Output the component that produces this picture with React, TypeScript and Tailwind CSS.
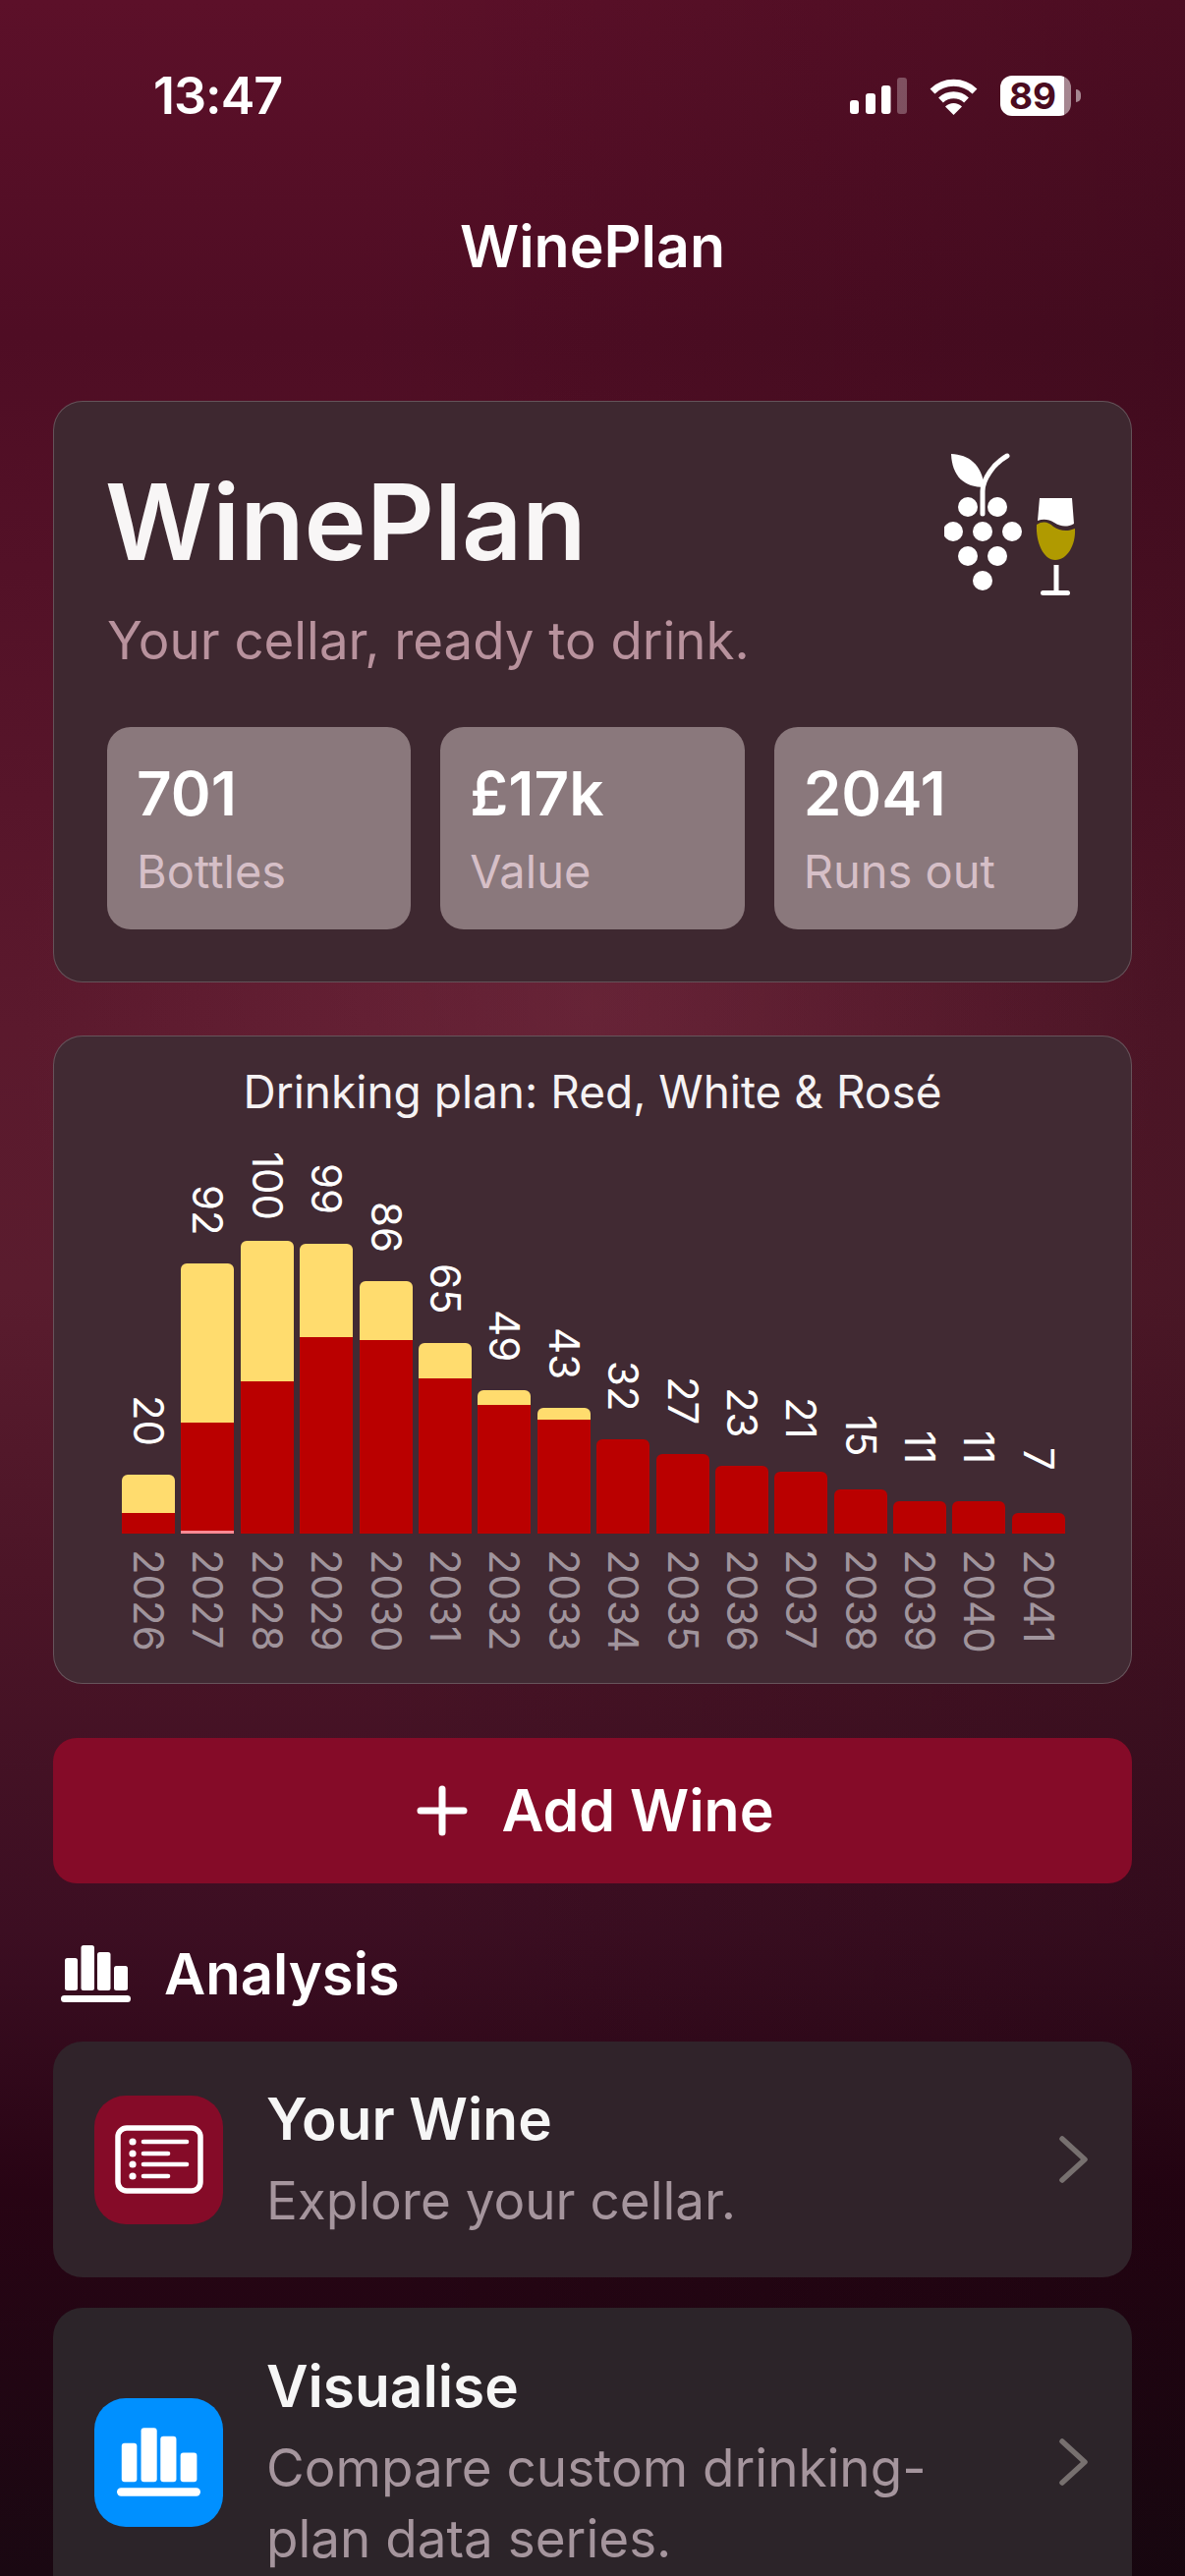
import React from 'react';

const bars = [
  { year: 2026, total: 20, red: 7, rose: 0 },
  { year: 2027, total: 92, red: 37, rose: 1 },
  { year: 2028, total: 100, red: 52, rose: 0 },
  { year: 2029, total: 99, red: 67, rose: 0 },
  { year: 2030, total: 86, red: 66, rose: 0 },
  { year: 2031, total: 65, red: 53, rose: 0 },
  { year: 2032, total: 49, red: 44, rose: 0 },
  { year: 2033, total: 43, red: 39, rose: 0 },
  { year: 2034, total: 32, red: 32, rose: 0 },
  { year: 2035, total: 27, red: 27, rose: 0 },
  { year: 2036, total: 23, red: 23, rose: 0 },
  { year: 2037, total: 21, red: 21, rose: 0 },
  { year: 2038, total: 15, red: 15, rose: 0 },
  { year: 2039, total: 11, red: 11, rose: 0 },
  { year: 2040, total: 11, red: 11, rose: 0 },
  { year: 2041, total: 7, red: 7, rose: 0 },
];

const PX_PER_BOTTLE = 2.985;

const stats = [
  { value: '701', label: 'Bottles' },
  { value: '£17k', label: 'Value' },
  { value: '2041', label: 'Runs out' },
];

function BarsIcon({ className }: { className: string }) {
  return (
    <svg viewBox="0 0 71 58" fill="white" className={className}>
      <rect x="4" y="13" width="13" height="33" rx="2.5" />
      <rect x="20.5" y="0" width="13.5" height="46" rx="2.5" />
      <rect x="37" y="7" width="13.5" height="39" rx="2.5" />
      <rect x="54" y="21" width="14" height="25" rx="2.5" />
      <rect x="0" y="51" width="71" height="7" rx="3.5" />
    </svg>
  );
}

function ListIcon() {
  return (
    <svg viewBox="0 0 90 70" fill="none" stroke="white" className="w-[90px] h-[70px]">
      <rect x="3" y="3" width="84" height="64" rx="9" strokeWidth="5.500" />
      {[17, 29, 40, 52].map((y, i) => (
        <g key={y}>
          <circle cx="18" cy={y} r="3.6" fill="white" stroke="none" />
          <line x1="29" x2={i % 2 === 0 ? 73 : 54} y1={y} y2={y} strokeWidth="4.6" strokeLinecap="round" />
        </g>
      ))}
    </svg>
  );
}

function GrapeLogo() {
  return (
    <svg viewBox="80 28 136 150" className="w-[136px] h-[150px] shrink-0">
      {[[104, 86], [134, 86], [89, 111], [119, 111], [149, 111], [104, 136], [134, 136], [119, 161]].map(([cx, cy]) => (
        <circle key={`${cx}-${cy}`} cx={cx} cy={cy} r="10" fill="white" />
      ))}
      <path d="M119 93 V70 C119 58 130 42 144 34" fill="none" stroke="white" strokeWidth="5" strokeLinecap="round" />
      <path d="M87 32 C105 33 118 42 121 66 C100 66 88 55 87 32 Z" fill="white" />
      <path d="M177 77 H210 L212 103 C205 107 198 106 192 102 C186 98 180 98 175 100 Z" fill="white" />
      <path d="M174 104 C180 100 186 101 191 106 C198 111 206 111 213 108 C214 125 205 140 193 140 C181 140 173 122 174 104 Z" fill="#b09a00" />
      <rect x="191.5" y="145" width="5" height="28" fill="white" />
      <rect x="178" y="171" width="30" height="5" rx="2.5" fill="white" />
    </svg>
  );
}

function StatusBar() {
  return (
    <div className="flex justify-between items-center h-[41px] mt-[77px] pl-[156px] pr-[106px]">
      <span className="text-[52px] leading-none font-semibold text-white tracking-[-1px]">13:47</span>
      <div className="flex items-center">
        <svg viewBox="0 0 58 38" fill="white" className="w-[58px] h-[38px] mr-[22px]">
          <rect x="0" y="23" width="9" height="14" rx="3" />
          <rect x="16" y="16" width="10" height="21" rx="3" />
          <rect x="32" y="8" width="9.5" height="29" rx="3" />
          <rect x="48" y="0" width="10" height="37" rx="3" opacity="0.28" />
        </svg>
        <svg viewBox="0 0 51 38" fill="white" className="w-[51px] h-[38px] mr-[22px]">
          <path d="M4 14 A31 31 0 0 1 47 14" fill="none" stroke="white" strokeWidth="7" />
          <path d="M12.5 23 A19 19 0 0 1 38.500 23" fill="none" stroke="white" strokeWidth="7" />
          <path d="M25.500 38 L17 29.500 A12 12 0 0 1 34 29.500 Z" />
        </svg>
        <div className="w-[72px] h-[41px] rounded-[12px] bg-[linear-gradient(90deg,#ffffff_90%,rgba(255,255,255,0.5)_90%)] flex items-center justify-center pr-[6px] text-[37px] font-bold text-[#4b0b20] leading-none">
          89
        </div>
        <div className="w-[5px] h-[13px] ml-[5px] rounded-r-full bg-white/50" />
      </div>
    </div>
  );
}

function DrinkingChart() {
  return (
    <section className="h-[660px] rounded-[30px] border border-white/20 bg-[#412a33] pt-[28px]">
      <h2 className="text-center text-[46px] leading-[56px] text-[#f5f2f3]">Drinking plan: Red, White &amp; Rosé</h2>
      <div className="flex items-end gap-[6.4px] h-[422px] pl-[69px]">
        {bars.map((b) => (
          <div key={b.year} className="w-[54px] flex flex-col items-center">
            <div className="h-[110px] flex items-center justify-center [writing-mode:vertical-rl] text-[42px] leading-none text-white">
              {b.total}
            </div>
            <div className="w-full flex flex-col rounded-t-[6px] overflow-hidden">
              <div className="bg-[#ffdc6e]" style={{ height: (b.total - b.red - b.rose) * PX_PER_BOTTLE }} />
              <div className="bg-[#ba0000]" style={{ height: b.red * PX_PER_BOTTLE }} />
              <div className="bg-[#ff8a94]" style={{ height: b.rose * PX_PER_BOTTLE }} />
            </div>
          </div>
        ))}
      </div>
      <div className="flex gap-[6.4px] pl-[69px] pt-[16px]">
        {bars.map((b) => (
          <div key={b.year} className="w-[54px] flex justify-center">
            <span className="[writing-mode:vertical-rl] text-[42px] leading-none text-[#a0949c]">{b.year}</span>
          </div>
        ))}
      </div>
    </section>
  );
}

function MenuRow({ title, children, subtitle, className }: { title: string; children: React.ReactNode; subtitle: React.ReactNode; className: string }) {
  return (
    <div className={`flex items-center rounded-[30px] pl-[42px] pr-[44px] shrink-0 ${className}`}>
      <div className="shrink-0">{children}</div>
      <div className="flex-1 ml-[44px]">
        <div className="text-[58.500px] leading-[72px] font-semibold text-[#f6f6f6]">{title}</div>
        <div className="text-[53px] leading-[72px] mt-[11px] text-[#a5959d]">{subtitle}</div>
      </div>
      <svg viewBox="0 0 30 48" fill="none" className="w-[30px] h-[48px] shrink-0">
        <path d="M3 3 L26 24 L3 45" stroke="#77706f" strokeWidth="5.500" strokeLinecap="round" strokeLinejoin="round" />
      </svg>
    </div>
  );
}

export default function App() {
  return (
    <div className="w-[1206px] h-[2622px] overflow-hidden [font-family:Inter,sans-serif] bg-[radial-gradient(ellipse_48%_24%_at_50%_39%,rgba(130,55,75,0.38),transparent),linear-gradient(90deg,transparent_30%,rgba(10,0,5,0.2)_100%),linear-gradient(180deg,#5c1029_0%,#4f0d24_13%,#5b192d_40%,#5a1c2e_50%,#4c1527_61%,#3c0e22_75%,#280414_85%,#1a0812_100%)]">
      <StatusBar />
      <div className="h-[171px] flex items-end justify-center pb-[2px]">
        <span className="text-[59px] leading-[72px] font-semibold text-white">WinePlan</span>
      </div>

      <main className="px-[54px] pt-[119px] flex flex-col">
        <section className="h-[592px] rounded-[30px] border border-white/20 bg-[#3e2830] px-[54px]">
          <div className="flex justify-between h-[331px] pt-[49px]">
            <div>
              <h1 className="text-[107px] leading-[146px] font-semibold text-[#f8f6f6] -ml-[2px]">WinePlan</h1>
              <p className="text-[52.800px] leading-[60px] mt-[18px] text-[#b8929d]">Your cellar, ready to drink.</p>
            </div>
            <GrapeLogo />
          </div>
          <div className="grid grid-cols-3 gap-[30px]">
            {stats.map((s) => (
              <div key={s.label} className="h-[206px] rounded-[24px] bg-[#8a787c] pl-[30px] pt-[32px]">
                <div className="text-[62px] leading-[72px] font-semibold text-white">{s.value}</div>
                <div className="text-[47px] leading-[54px] mt-[16px] text-[#d6bfc7]">{s.label}</div>
              </div>
            ))}
          </div>
        </section>

        <div className="mt-[54px]">
          <DrinkingChart />
        </div>

        <button className="mt-[55px] h-[148px] rounded-[24px] bg-[#850b28] flex items-center justify-center gap-[34px] pl-[6px]">
          <svg viewBox="0 0 52 52" fill="none" stroke="white" strokeWidth="7" strokeLinecap="round" className="w-[52px] h-[52px]">
            <path d="M26 4 V48 M4 26 H48" />
          </svg>
          <span className="text-[59px] font-semibold text-white">Add Wine</span>
        </button>

        <div className="flex items-center h-[60px] mt-[62px] pl-[8px]">
          <BarsIcon className="w-[71px] h-[58px]" />
          <span className="ml-[34px] text-[58px] leading-none font-semibold text-white">Analysis</span>
        </div>

        <div className="mt-[39px] flex flex-col gap-[31px]">
          <MenuRow
            title="Your Wine"
            subtitle="Explore your cellar."
            className="h-[240px] bg-[#30232a]"
          >
            <div className="w-[131px] h-[131px] rounded-[32px] bg-[#850b28] flex items-center justify-center">
              <ListIcon />
            </div>
          </MenuRow>
          <MenuRow
            title="Visualise"
            subtitle={<>Compare custom drinking-<br />plan data series.</>}
            className="h-[314px] bg-[#2c2429]"
          >
            <div className="w-[131px] h-[131px] rounded-[32px] bg-[#0090ff] flex items-center justify-center">
              <BarsIcon className="w-[85px] h-[70px]" />
            </div>
          </MenuRow>
        </div>
      </main>
    </div>
  );
}
